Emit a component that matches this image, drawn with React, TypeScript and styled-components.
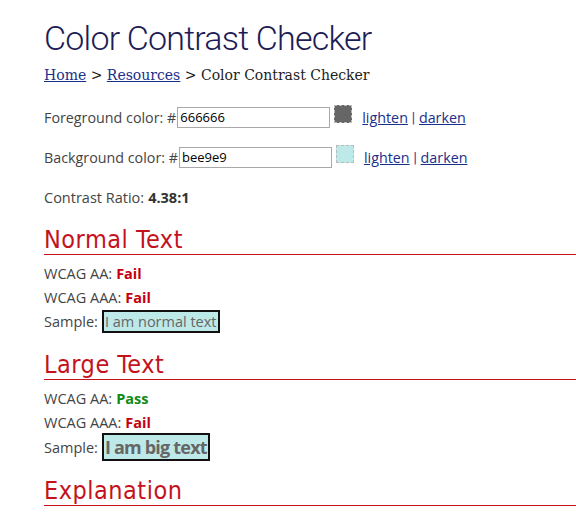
import React from "react";
import styled, { createGlobalStyle } from "styled-components";

const Global = createGlobalStyle`
  html, body { margin: 0; padding: 0; background: #fff; }
  body { font-family: "Open Sans", "Noto Sans", sans-serif; color: #333; }
`;

const Page = styled.div`
  padding: 14px 0 0 44px;
  overflow: hidden;
`;

const Title = styled.h1`
  margin: 0;
  font-family: Roboto, "Liberation Sans", sans-serif;
  font-weight: 300;
  font-size: 34px;
  letter-spacing: -0.8px;
  line-height: 48px;
  color: #1c1c55;
`;

const Crumbs = styled.nav`
  font-family: "DejaVu Serif", "Liberation Serif", serif;
  font-size: 14px;
  line-height: 22px;
  color: #222;
  margin-top: 2px;
`;

const Link = styled.a`
  color: #1a2f8a;
  text-decoration: underline;
`;

const ColorRow = styled.div<{ $mt: number }>`
  display: flex;
  align-items: center;
  font-size: 14.3px;
  height: 40px;
  margin-top: ${(p) => p.$mt}px;
`;

const Label = styled.span`
  color: #444;
`;

const HexInput = styled.input<{ $w: number }>`
  box-sizing: border-box;
  width: ${(p) => p.$w}px;
  height: 21px;
  border: 1px solid #a9a9a9;
  padding: 1px 2px;
  font-family: "Open Sans", sans-serif;
  font-size: 13px;
  color: #000;
  margin-left: 1px;
  outline: none;
`;

const Swatch = styled.span<{ $bg: string; $dy: number }>`
  display: inline-block;
  box-sizing: border-box;
  width: 18px;
  height: 18px;
  background: ${(p) => p.$bg};
  border: 1px dashed #bbb;
  margin: 0 10px 0 4px;
  position: relative;
  top: ${(p) => p.$dy}px;
`;

const Sep = styled.span`
  display: inline-block;
  width: 11px;
  text-align: center;
  font-family: "DejaVu Sans", sans-serif;
  font-size: 13px;
  color: #7a2a8a;
`;

const Line = styled.div<{ $h?: number }>`
  display: flex;
  align-items: center;
  gap: 4px;
  height: ${(p) => p.$h ?? 24}px;
  font-size: 14.5px;
  color: #444;
  white-space: nowrap;
`;

const Ratio = styled(Line)`
  margin-top: 8px;
  b { color: #333; }
`;

const Section = styled.section<{ $mt: number }>`
  margin-top: ${(p) => p.$mt}px;
`;

const Heading = styled.h2`
  margin: 0 0 6px;
  font-family: "DejaVu Sans Condensed", "DejaVu Sans", sans-serif;
  font-weight: 400;
  font-size: 25px;
  letter-spacing: 0.5px;
  line-height: 29px;
  height: 29px;
  color: #c4121c;
  border-bottom: 1px solid #c4121c;
`;

const Verdict = styled.b<{ $pass: boolean }>`
  color: ${(p) => (p.$pass ? "#118a11" : "#c4000f")};
`;

const Sample = styled.span<{ $big?: boolean }>`
  display: inline-block;
  background: #bee9e9;
  color: #666666;
  border: 2px solid #111;
  padding: 0 1px;
  font-size: ${(p) => (p.$big ? "18px" : "14.5px")};
  font-weight: ${(p) => (p.$big ? 700 : 400)};
  letter-spacing: ${(p) => (p.$big ? "-0.8px" : "0")};
  line-height: ${(p) => (p.$big ? "24px" : "19px")};
`;

export default function App() {
  return (
    <Page>
      <Global />
      <Title>Color Contrast Checker</Title>
      <Crumbs>
        <Link href="#">Home</Link> &gt; <Link href="#">Resources</Link> &gt; Color Contrast Checker
      </Crumbs>
      <ColorRow $mt={11}>
        <Label>Foreground color: #</Label>
        <HexInput $w={153} defaultValue="666666" />
        <Swatch $bg="#666666" $dy={-3} />
        <Link href="#">lighten</Link>
        <Sep>|</Sep>
        <Link href="#">darken</Link>
      </ColorRow>
      <ColorRow $mt={0}>
        <Label>Background color: #</Label>
        <HexInput $w={153} defaultValue="bee9e9" />
        <Swatch $bg="#bee9e9" $dy={-3} />
        <Link href="#">lighten</Link>
        <Sep>|</Sep>
        <Link href="#">darken</Link>
      </ColorRow>
      <Ratio>
        <span>Contrast Ratio:</span>
        <b>4.38:1</b>
      </Ratio>
      <Section $mt={16}>
        <Heading>Normal Text</Heading>
        <Line>
          <span>WCAG AA:</span>
          <Verdict $pass={false}>Fail</Verdict>
        </Line>
        <Line>
          <span>WCAG AAA:</span>
          <Verdict $pass={false}>Fail</Verdict>
        </Line>
        <Line>
          <span>Sample:</span>
          <Sample>I am normal text</Sample>
        </Line>
      </Section>
      <Section $mt={17}>
        <Heading>Large Text</Heading>
        <Line>
          <span>WCAG AA:</span>
          <Verdict $pass={true}>Pass</Verdict>
        </Line>
        <Line>
          <span>WCAG AAA:</span>
          <Verdict $pass={false}>Fail</Verdict>
        </Line>
        <Line $h={26}>
          <span>Sample:</span>
          <Sample $big>I am big text</Sample>
        </Line>
      </Section>
      <Section $mt={16}>
        <Heading>Explanation</Heading>
      </Section>
    </Page>
  );
}
